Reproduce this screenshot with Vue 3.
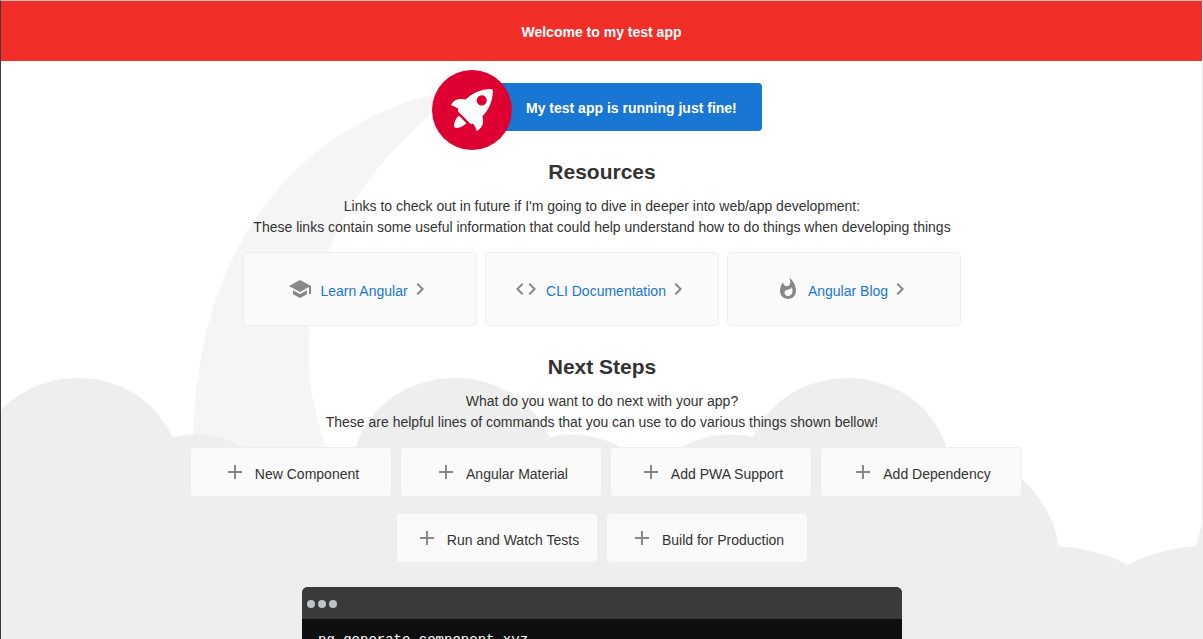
<script setup>
const resources = [
  {
    label: 'Learn Angular',
    href: '#learn',
    icon: 'M5 13.18v4L12 21l7-3.82v-4L12 17l-7-3.82zM12 3L1 9l11 6 9-4.91V17h2V9L12 3z',
  },
  {
    label: 'CLI Documentation',
    href: '#cli',
    icon: 'M9.4 16.6L4.8 12l4.6-4.6L8 6l-6 6 6 6 1.4-1.4zm5.2 0l4.6-4.6-4.6-4.6L16 6l6 6-6 6-1.4-1.4z',
  },
  {
    label: 'Angular Blog',
    href: '#blog',
    icon: 'M13.5.67s.74 2.65.74 4.8c0 2.06-1.35 3.73-3.41 3.73-2.07 0-3.63-1.67-3.63-3.73l.03-.36C5.21 7.51 4 10.62 4 14c0 4.42 3.58 8 8 8s8-3.58 8-8C20 8.61 17.41 3.8 13.5.67zM11.71 19c-1.78 0-3.22-1.4-3.22-3.14 0-1.62 1.05-2.76 2.81-3.12 1.77-.36 3.6-1.21 4.62-2.58.39 1.29.59 2.65.59 4.04 0 2.65-2.15 4.8-4.8 4.8z',
  },
]
const primarySteps = ['New Component', 'Angular Material', 'Add PWA Support', 'Add Dependency']
const buildSteps = ['Run and Watch Tests', 'Build for Production']
</script>

<template>
  <div class="page">
    <div class="backdrop" aria-hidden="true">
      <svg class="smoke" viewBox="0 0 516.119 1083.632">
        <path
          transform="translate(-147.025 -140.939)"
          d="M644.6,141S143.02,215.537,147.049,870.207s342.774,201.755,342.774,201.755S404.659,847.213,388.815,762.2c-27.116-145.51-11.551-384.124,271.9-609.1C671.15,139.365,644.6,141,644.6,141Z"
        />
      </svg>
      <svg class="clouds" viewBox="0 0 2611 486">
        <path
          transform="translate(142.69 -634.312)"
          d="M2379.709,863.793c10-93-77-171-168-149-52-114-225-105-264,15-75,3-140,59-152,133-30,2.83-66.725,9.829-93.5,26.25-26.771-16.421-63.5-23.42-93.5-26.25-12-74-77-130-152-133-39-120-212-129-264-15-54.084-13.075-106.753,9.173-138.488,48.9-31.734-39.726-84.4-61.974-138.487-48.9-52-114-225-105-264,15a162.027,162.027,0,0,0-103.147,43.044c-30.633-45.365-87.1-72.091-145.206-58.044-52-114-225-105-264,15-75,3-140,59-152,133V1120H2379.709Z"
        />
      </svg>
    </div>

    <header class="toolbar">Welcome to my test app</header>

    <main class="content">
      <div class="highlight">
        <svg class="rocket" viewBox="0 0 101.678 101.678" aria-hidden="true">
          <circle cx="50.839" cy="50.839" r="50.839" fill="#dd0031" />
          <g transform="translate(24.185 24.185)" fill="#fff">
            <path
              transform="translate(0.371 3.363)"
              d="M3.4,42.615a3.084,3.084,0,0,0,3.553,3.553,21.419,21.419,0,0,0,12.215-6.107L9.511,30.4A21.419,21.419,0,0,0,3.4,42.615Z"
            />
            <path
              d="M53.3,3.221A3.09,3.09,0,0,0,50.081,0,48.227,48.227,0,0,0,18.322,13.437c-6-1.666-14.991-1.221-18.322,7.218A33.892,33.892,0,0,1,9.439,25.1l-.333.666a3.013,3.013,0,0,0,.555,3.553L23.985,43.641a2.9,2.9,0,0,0,3.553.555l.666-.333A33.892,33.892,0,0,1,32.647,53.3c8.55-3.664,8.884-12.326,7.218-18.322A48.227,48.227,0,0,0,53.3,3.221ZM34.424,9.772a6.439,6.439,0,1,1,9.106,9.106,6.368,6.368,0,0,1-9.106,0A6.467,6.467,0,0,1,34.424,9.772Z"
            />
          </g>
        </svg>
        <span>My test app is running just fine!</span>
      </div>

      <h2>Resources</h2>
      <p>
        Links to check out in future if I'm going to dive in deeper into web/app development:<br />
        These links contain some useful information that could help understand how to do things when developing things
      </p>
      <nav class="cards" aria-label="Resources">
        <a v-for="item in resources" :key="item.label" class="card" :href="item.href">
          <svg class="icon lead" viewBox="0 0 24 24" aria-hidden="true"><path :d="item.icon" /></svg>
          <span class="label">{{ item.label }}</span>
          <svg class="icon" viewBox="0 0 24 24" aria-hidden="true">
            <path d="M10 6L8.59 7.41 13.17 12l-4.58 4.59L10 18l6-6z" />
          </svg>
        </a>
      </nav>

      <h2>Next Steps</h2>
      <p>
        What do you want to do next with your app?<br />
        These are helpful lines of commands that you can use to do various things shown bellow!
      </p>
      <div class="steps">
        <div class="step-row primary">
          <button v-for="step in primarySteps" :key="step" type="button" class="step">
            <svg class="icon lead" viewBox="0 0 24 24" aria-hidden="true"><path d="M19 13h-6v6h-2v-6H5v-2h6V5h2v6h6v2z" /></svg>
            <span class="label">{{ step }}</span>
          </button>
        </div>
        <div class="step-row">
          <button v-for="step in buildSteps" :key="step" type="button" class="step">
            <svg class="icon lead" viewBox="0 0 24 24" aria-hidden="true"><path d="M19 13h-6v6h-2v-6H5v-2h6V5h2v6h6v2z" /></svg>
            <span class="label">{{ step }}</span>
          </button>
        </div>
      </div>

      <section class="terminal" aria-label="Terminal">
        <div class="terminal-bar"><i></i><i></i><i></i></div>
        <pre>ng generate component xyz</pre>
      </section>
    </main>
  </div>
</template>

<style>
body {
  margin: 0;
  background: #fff;
}
</style>

<style scoped>
.page {
  position: relative;
  z-index: 0;
  box-sizing: border-box;
  min-height: 100vh;
  overflow: hidden;
  border-top: 1px solid #c1c0c0;
  border-left: 1px solid #43383d;
  box-shadow: inset -1px 0 #eee;
  color: #333;
  font: 14px/21px "Liberation Sans", Arial, sans-serif;
}

.backdrop {
  position: absolute;
  top: 0;
  right: 1px;
  left: 0;
  z-index: -1;
  height: 100vh;
  overflow: hidden;
}

.clouds {
  position: absolute;
  bottom: -95px;
  left: -230px;
  width: 1920px;
  fill: #eee;
}

.smoke {
  position: absolute;
  top: 92px;
  right: 50%;
  height: calc(100vh - 99px);
  margin-right: 151px;
  fill: #f5f5f5;
}

.toolbar {
  display: flex;
  align-items: center;
  justify-content: center;
  box-sizing: border-box;
  height: 60px;
  margin-right: 1px;
  padding-top: 2px;
  background: #f12e28;
  color: #fff;
  font-weight: 700;
}

.content {
  display: flex;
  flex-direction: column;
  align-items: center;
  padding: 22px 16px 32px;
}

.highlight {
  position: relative;
  display: flex;
  align-items: center;
  box-sizing: border-box;
  width: 320px;
  height: 48px;
  padding: 2px 0 0 84px;
  border-radius: 4px;
  background: #1976d2;
  color: #fff;
  font-weight: 700;
}

.rocket {
  position: absolute;
  top: -13px;
  left: -10px;
  width: 80px;
  height: 80px;
}

h2 {
  margin: 25px 0 8px;
  font-size: 21px;
  line-height: 32px;
}

p {
  margin: 0 0 14px;
  text-align: center;
}

.cards,
.step-row {
  display: flex;
  flex-wrap: wrap;
  justify-content: center;
  gap: 8px;
}

.card,
.step {
  display: flex;
  align-items: center;
  justify-content: center;
  box-sizing: border-box;
  border: 1px solid #eee;
  border-radius: 4px;
  background: #fafafa;
}

.card {
  width: 234px;
  height: 74px;
  color: #1976d2;
  text-decoration: none;
}

.step {
  width: 202px;
  height: 50px;
  padding: 0;
  color: #333;
  font: inherit;
  cursor: pointer;
}

.icon {
  width: 24px;
  height: 24px;
  fill: #888;
}

.lead {
  margin-right: 8px;
}

.label {
  padding-top: 4px;
}

.steps {
  display: flex;
  flex-direction: column;
  gap: 16px;
}

.primary {
  padding-left: 8px;
}

.terminal {
  width: 600px;
  max-width: 100%;
  margin-top: 24px;
  overflow: hidden;
  border-radius: 6px;
  background: #0f0f0f;
  color: #fff;
}

.terminal-bar {
  display: flex;
  align-items: center;
  gap: 3px;
  box-sizing: border-box;
  height: 32px;
  padding: 2px 5px 0;
  background: #3a3a3a;
}

.terminal-bar i {
  width: 8px;
  height: 8px;
  border-radius: 50%;
  background: #c2c3c4;
}

pre {
  margin: 0;
  padding: 11px 16px 24px;
  font: 14px/21px "Liberation Mono", "Courier New", monospace;
}
</style>
